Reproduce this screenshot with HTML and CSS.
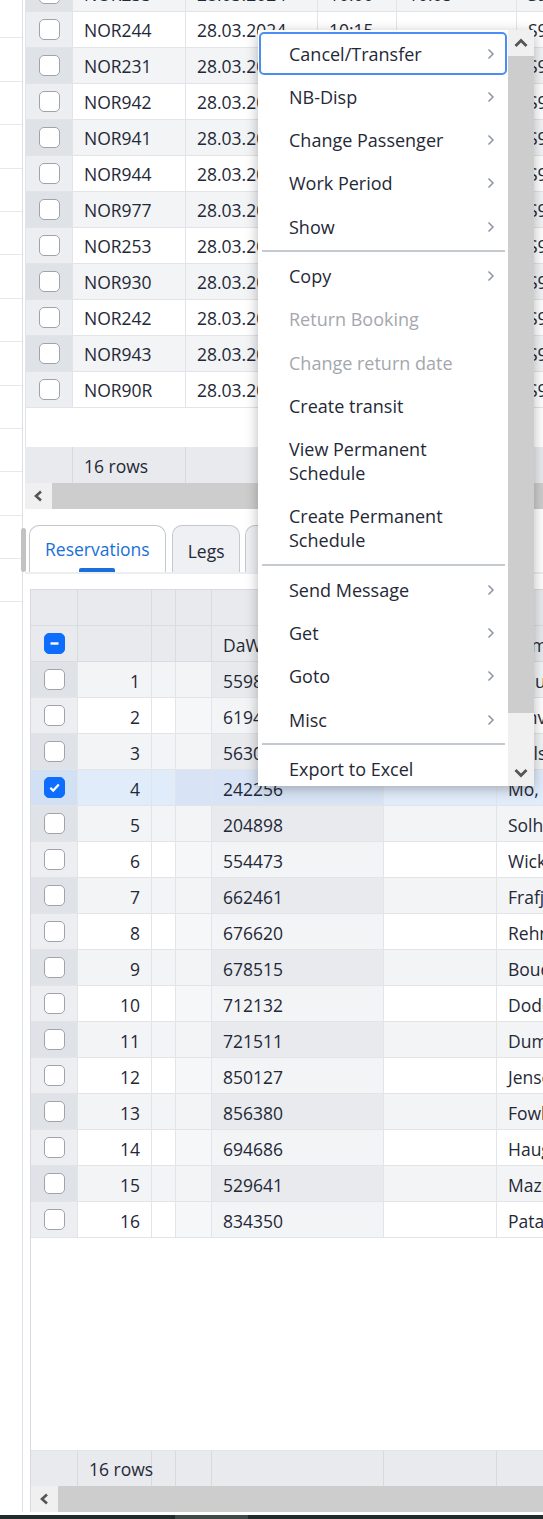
FILE: index.html
```html
<!DOCTYPE html>
<html lang="en">
<head>
<meta charset="utf-8">
<title>Bookings</title>
<link rel="stylesheet" href="styles.css">
</head>
<body>
<div class="app">
  <aside class="side">
    <div class="side-list">
      <div class="side-item"></div><div class="side-item"></div><div class="side-item"></div><div class="side-item"></div>
      <div class="side-item"></div><div class="side-item"></div><div class="side-item"></div><div class="side-item"></div>
      <div class="side-item"></div><div class="side-item"></div><div class="side-item"></div><div class="side-item"></div>
      <div class="side-item"></div><div class="side-item"></div>
    </div>
  </aside>
  <main class="main">
    <section class="tgrid">
      <div class="tbody">
        <div class="tbody-inner">
          <div class="trow alt"><div class="cell cb-cell"><span class="cb"></span></div><div class="cell">NOR233</div><div class="cell">28.03.2024</div><div class="cell">10:00</div><div class="cell">10:05</div><div class="cell">S9 Nord</div></div>
          <div class="trow"><div class="cell cb-cell"><span class="cb"></span></div><div class="cell">NOR244</div><div class="cell">28.03.2024</div><div class="cell">10:15</div><div class="cell"></div><div class="cell">S9 Nord</div></div>
          <div class="trow alt"><div class="cell cb-cell"><span class="cb"></span></div><div class="cell">NOR231</div><div class="cell">28.03.2024</div><div class="cell">10:20</div><div class="cell">10:25</div><div class="cell">S9 Nord</div></div>
          <div class="trow"><div class="cell cb-cell"><span class="cb"></span></div><div class="cell">NOR942</div><div class="cell">28.03.2024</div><div class="cell">10:30</div><div class="cell">10:35</div><div class="cell">S9 Nord</div></div>
          <div class="trow alt"><div class="cell cb-cell"><span class="cb"></span></div><div class="cell">NOR941</div><div class="cell">28.03.2024</div><div class="cell">10:40</div><div class="cell">10:45</div><div class="cell">S9 Nord</div></div>
          <div class="trow"><div class="cell cb-cell"><span class="cb"></span></div><div class="cell">NOR944</div><div class="cell">28.03.2024</div><div class="cell">10:50</div><div class="cell">10:55</div><div class="cell">S9 Nord</div></div>
          <div class="trow alt"><div class="cell cb-cell"><span class="cb"></span></div><div class="cell">NOR977</div><div class="cell">28.03.2024</div><div class="cell">11:00</div><div class="cell">11:05</div><div class="cell">S9 Nord</div></div>
          <div class="trow"><div class="cell cb-cell"><span class="cb"></span></div><div class="cell">NOR253</div><div class="cell">28.03.2024</div><div class="cell">11:10</div><div class="cell">11:15</div><div class="cell">S9 Nord</div></div>
          <div class="trow alt"><div class="cell cb-cell"><span class="cb"></span></div><div class="cell">NOR930</div><div class="cell">28.03.2024</div><div class="cell">11:20</div><div class="cell">11:25</div><div class="cell">S9 Nord</div></div>
          <div class="trow"><div class="cell cb-cell"><span class="cb"></span></div><div class="cell">NOR242</div><div class="cell">28.03.2024</div><div class="cell">11:30</div><div class="cell">11:35</div><div class="cell">S9 Nord</div></div>
          <div class="trow alt"><div class="cell cb-cell"><span class="cb"></span></div><div class="cell">NOR943</div><div class="cell">28.03.2024</div><div class="cell">11:40</div><div class="cell">11:45</div><div class="cell">S9 Nord</div></div>
          <div class="trow"><div class="cell cb-cell"><span class="cb"></span></div><div class="cell">NOR90R</div><div class="cell">28.03.2024</div><div class="cell">11:50</div><div class="cell">11:55</div><div class="cell">S9 Nord</div></div>
        </div>
      </div>
      <div class="tfoot"><div class="fcell"></div><div class="fcell">16 rows</div><div class="fcell"></div><div class="fcell"></div><div class="fcell"></div><div class="fcell"></div></div>
      <div class="hscroll">
        <div class="hs-btn"><svg width="11" height="12" viewBox="0 0 11 12"><path d="M8 1.5 L3 6 L8 10.5" fill="none" stroke="#555" stroke-width="2.6"/></svg></div>
        <div class="hs-thumb"></div>
      </div>
    </section>

    <nav class="tabs">
      <div class="tab active"><span class="tab-label">Reservations</span><span class="tab-ind"></span></div>
      <div class="tab"><span class="tab-label">Legs</span></div>
      <div class="tab"><span class="tab-label">Stops</span></div>
    </nav>

    <section class="panel">
      <div class="bgrid">
        <div class="bhead first"><div class="hcell"></div><div class="hcell"></div><div class="hcell"></div><div class="hcell"></div><div class="hcell"></div><div class="hcell"></div><div class="hcell"></div></div>
        <div class="bhead"><div class="hcell cb-cell"><span class="cb on"><svg width="13" height="13" viewBox="0 0 13 13"><path d="M2.5 6.5 H10.5" stroke="#fff" stroke-width="2.4"/></svg></span></div><div class="hcell"></div><div class="hcell"></div><div class="hcell"></div><div class="hcell">DaWId</div><div class="hcell"></div><div class="hcell">Name</div></div>

        <div class="brow alt"><div class="cell cb-cell"><span class="cb"></span></div><div class="cell num">1</div><div class="cell"></div><div class="cell c4"></div><div class="cell key">559812</div><div class="cell"></div><div class="cell">Hajuk, Per</div></div>
        <div class="brow"><div class="cell cb-cell"><span class="cb"></span></div><div class="cell num">2</div><div class="cell"></div><div class="cell c4"></div><div class="cell key">619437</div><div class="cell"></div><div class="cell">Lanvik, Ola</div></div>
        <div class="brow alt"><div class="cell cb-cell"><span class="cb"></span></div><div class="cell num">3</div><div class="cell"></div><div class="cell c4"></div><div class="cell key">563094</div><div class="cell"></div><div class="cell">Melsom, Kari</div></div>
        <div class="brow sel"><div class="cell cb-cell"><span class="cb on"><svg width="13" height="13" viewBox="0 0 13 13"><path d="M2.3 6.8 L5.2 9.6 L10.8 3.6" fill="none" stroke="#fff" stroke-width="2.2"/></svg></span></div><div class="cell num">4</div><div class="cell"></div><div class="cell c4"></div><div class="cell key">242256</div><div class="cell"></div><div class="cell">Mo, Anne</div></div>
        <div class="brow alt"><div class="cell cb-cell"><span class="cb"></span></div><div class="cell num">5</div><div class="cell"></div><div class="cell c4"></div><div class="cell key">204898</div><div class="cell"></div><div class="cell">Solheim, Jon</div></div>
        <div class="brow"><div class="cell cb-cell"><span class="cb"></span></div><div class="cell num">6</div><div class="cell"></div><div class="cell c4"></div><div class="cell key">554473</div><div class="cell"></div><div class="cell">Wickstrøm, Eva</div></div>
        <div class="brow alt"><div class="cell cb-cell"><span class="cb"></span></div><div class="cell num">7</div><div class="cell"></div><div class="cell c4"></div><div class="cell key">662461</div><div class="cell"></div><div class="cell">Frafjord, Lars</div></div>
        <div class="brow"><div class="cell cb-cell"><span class="cb"></span></div><div class="cell num">8</div><div class="cell"></div><div class="cell c4"></div><div class="cell key">676620</div><div class="cell"></div><div class="cell">Rehn, Siri</div></div>
        <div class="brow alt"><div class="cell cb-cell"><span class="cb"></span></div><div class="cell num">9</div><div class="cell"></div><div class="cell c4"></div><div class="cell key">678515</div><div class="cell"></div><div class="cell">Boudet, Marc</div></div>
        <div class="brow"><div class="cell cb-cell"><span class="cb"></span></div><div class="cell num">10</div><div class="cell"></div><div class="cell c4"></div><div class="cell key">712132</div><div class="cell"></div><div class="cell">Dodd, Helen</div></div>
        <div class="brow alt"><div class="cell cb-cell"><span class="cb"></span></div><div class="cell num">11</div><div class="cell"></div><div class="cell c4"></div><div class="cell key">721511</div><div class="cell"></div><div class="cell">Dumas, Eric</div></div>
        <div class="brow"><div class="cell cb-cell"><span class="cb"></span></div><div class="cell num">12</div><div class="cell"></div><div class="cell c4"></div><div class="cell key">850127</div><div class="cell"></div><div class="cell">Jensen, Tor</div></div>
        <div class="brow alt"><div class="cell cb-cell"><span class="cb"></span></div><div class="cell num">13</div><div class="cell"></div><div class="cell c4"></div><div class="cell key">856380</div><div class="cell"></div><div class="cell">Fowler, Ann</div></div>
        <div class="brow"><div class="cell cb-cell"><span class="cb"></span></div><div class="cell num">14</div><div class="cell"></div><div class="cell c4"></div><div class="cell key">694686</div><div class="cell"></div><div class="cell">Haugen, Liv</div></div>
        <div class="brow alt"><div class="cell cb-cell"><span class="cb"></span></div><div class="cell num">15</div><div class="cell"></div><div class="cell c4"></div><div class="cell key">529641</div><div class="cell"></div><div class="cell">Mazur, Ewa</div></div>
        <div class="brow"><div class="cell cb-cell"><span class="cb"></span></div><div class="cell num">16</div><div class="cell"></div><div class="cell c4"></div><div class="cell key">834350</div><div class="cell"></div><div class="cell">Patane, Rita</div></div>

        <div class="bempty"></div>
        <div class="bfoot"><div class="fcell"></div><div class="fcell">16 rows</div><div class="fcell"></div><div class="fcell"></div><div class="fcell"></div><div class="fcell"></div><div class="fcell"></div></div>
        <div class="hscroll">
          <div class="hs-btn"><svg width="11" height="12" viewBox="0 0 11 12"><path d="M8 1.5 L3 6 L8 10.5" fill="none" stroke="#555" stroke-width="2.6"/></svg></div>
          <div class="hs-thumb"></div>
        </div>
      </div>
    </section>
  </main>
</div>
<div class="bottom-gap"></div>
<div class="taskbar"><span class="tb-seg"></span></div>

<div class="splitter"></div>

<div class="menu">
  <div class="menu-list">
    <div class="mi focus"><span class="lbl">Cancel/Transfer</span><svg class="chev" width="8" height="12" viewBox="0 0 8 12"><path d="M1.5 1.5 L6 6 L1.5 10.5" fill="none" stroke="#8d95a5" stroke-width="1.5"/></svg></div>
    <div class="mi"><span class="lbl">NB-Disp</span><svg class="chev" width="8" height="12" viewBox="0 0 8 12"><path d="M1.5 1.5 L6 6 L1.5 10.5" fill="none" stroke="#8d95a5" stroke-width="1.5"/></svg></div>
    <div class="mi"><span class="lbl">Change Passenger</span><svg class="chev" width="8" height="12" viewBox="0 0 8 12"><path d="M1.5 1.5 L6 6 L1.5 10.5" fill="none" stroke="#8d95a5" stroke-width="1.5"/></svg></div>
    <div class="mi"><span class="lbl">Work Period</span><svg class="chev" width="8" height="12" viewBox="0 0 8 12"><path d="M1.5 1.5 L6 6 L1.5 10.5" fill="none" stroke="#8d95a5" stroke-width="1.5"/></svg></div>
    <div class="mi"><span class="lbl">Show</span><svg class="chev" width="8" height="12" viewBox="0 0 8 12"><path d="M1.5 1.5 L6 6 L1.5 10.5" fill="none" stroke="#8d95a5" stroke-width="1.5"/></svg></div>
    <div class="sep"></div>
    <div class="mi"><span class="lbl">Copy</span><svg class="chev" width="8" height="12" viewBox="0 0 8 12"><path d="M1.5 1.5 L6 6 L1.5 10.5" fill="none" stroke="#8d95a5" stroke-width="1.5"/></svg></div>
    <div class="mi disabled"><span class="lbl">Return Booking</span></div>
    <div class="mi disabled"><span class="lbl">Change return date</span></div>
    <div class="mi"><span class="lbl">Create transit</span></div>
    <div class="mi"><span class="lbl">View Permanent<br>Schedule</span></div>
    <div class="mi"><span class="lbl">Create Permanent<br>Schedule</span></div>
    <div class="sep"></div>
    <div class="mi"><span class="lbl">Send Message</span><svg class="chev" width="8" height="12" viewBox="0 0 8 12"><path d="M1.5 1.5 L6 6 L1.5 10.5" fill="none" stroke="#8d95a5" stroke-width="1.5"/></svg></div>
    <div class="mi"><span class="lbl">Get</span><svg class="chev" width="8" height="12" viewBox="0 0 8 12"><path d="M1.5 1.5 L6 6 L1.5 10.5" fill="none" stroke="#8d95a5" stroke-width="1.5"/></svg></div>
    <div class="mi"><span class="lbl">Goto</span><svg class="chev" width="8" height="12" viewBox="0 0 8 12"><path d="M1.5 1.5 L6 6 L1.5 10.5" fill="none" stroke="#8d95a5" stroke-width="1.5"/></svg></div>
    <div class="mi"><span class="lbl">Misc</span><svg class="chev" width="8" height="12" viewBox="0 0 8 12"><path d="M1.5 1.5 L6 6 L1.5 10.5" fill="none" stroke="#8d95a5" stroke-width="1.5"/></svg></div>
    <div class="sep"></div>
    <div class="mi"><span class="lbl">Export to Excel</span></div>
  </div>
  <div class="mscroll">
    <div class="ms-btn"><svg width="14" height="10" viewBox="0 0 14 10"><path d="M1.5 8 L7 2.5 L12.5 8" fill="none" stroke="#555" stroke-width="2.8"/></svg></div>
    <div class="ms-thumb"></div>
    <div class="ms-track"></div>
    <div class="ms-btn"><svg width="14" height="10" viewBox="0 0 14 10"><path d="M1.5 2 L7 7.5 L12.5 2" fill="none" stroke="#555" stroke-width="2.8"/></svg></div>
  </div>
</div>
</body>
</html>
```
FILE: styles.css
```css
* { box-sizing: border-box; }
html, body { margin: 0; padding: 0; }
body {
  width: 543px;
  height: 1519px;
  overflow: hidden;
  position: relative;
  font-family: "Open Sans", "Noto Sans", sans-serif;
  font-size: 17.5px;
  color: #1f2937;
  background: #fff;
}

.app { display: flex; height: 1512px; }

/* left strip */
.side { width: 23px; flex: none; border-right: 1px solid #dcdfe4; overflow: hidden; }
.side-list { margin-top: -5px; }
.side-item { height: 43.4px; border-bottom: 1px solid #e6e8ec; }

.main { flex: 1; min-width: 0; padding-left: 2px; display: flex; flex-direction: column; overflow: hidden; }

/* top grid */
.tgrid { width: 720px; flex: none; }
.tbody { height: 447px; overflow: hidden; border-left: 1px solid #e2e4e8; }
.tbody-inner { margin-top: -24px; }
.trow {
  display: grid;
  grid-template-columns: 47px 113px 132px 79px 120px 229px;
  height: 36px;
  border-bottom: 1px solid #e2e4e8;
  background: #fff;
}
.trow.alt { background: #f3f4f6; }
.cell {
  display: flex;
  align-items: center;
  padding: 1px 11px 0;
  border-right: 1px solid #e2e4e8;
  white-space: nowrap;
  overflow: hidden;
}
.cb-cell { justify-content: center; padding: 0; }
.trow .cb-cell { background: #eceef1; }
.trow.alt .cb-cell { background: #dfe2e6; }

.cb {
  width: 21px;
  height: 21px;
  border: 1.7px solid #9fa3aa;
  border-radius: 5px;
  background: #fff;
  display: flex;
  align-items: center;
  justify-content: center;
}
.cb.on { background: #0d6efd; border-color: #0d6efd; }

.tfoot {
  display: grid;
  grid-template-columns: 48px 113px 132px 79px 120px 229px;
  height: 36px;
  background: #e9eaed;
}
.fcell {
  display: flex;
  align-items: center;
  padding: 1px 11px 0;
  border-right: 1px solid #d6d9de;
  white-space: nowrap;
}

.hscroll { display: flex; height: 26px; flex: none; }
.hs-btn { width: 27px; background: #f0f0f0; display: flex; align-items: center; justify-content: center; }
.hs-thumb { flex: 1; background: #cdcdcd; }

/* tabs */
.tabs { display: flex; gap: 6px; padding-left: 4px; margin-top: 16px; height: 47px; flex: none; }
.tab {
  height: 47px;
  border: 1px solid #c3c7ce;
  border-bottom: none;
  border-radius: 10px 10px 0 0;
  padding: 0 15px;
  display: flex;
  flex-direction: column;
  align-items: center;
  background: #eef0f3;
  white-space: nowrap;
}
.tab + .tab + .tab { margin-left: -1px; width: 110px; }
.tab-label { flex: 1; display: flex; align-items: center; padding-top: 4px; }
.tab.active { background: #fff; color: #1a6fd8; }
.tab-ind { width: 36px; height: 4px; background: #1a6fd8; border-radius: 2px 2px 0 0; }

/* bottom panel */
.panel {
  flex: 1;
  border-top: 2px solid #eceef1;
  padding: 15px 0 0 5px;
  display: flex;
  flex-direction: column;
  min-height: 0;
}
.bgrid {
  width: 800px;
  flex: 1;
  display: flex;
  flex-direction: column;
  border-left: 1px solid #d6d9de;
}
.bhead, .brow, .bfoot {
  display: grid;
  grid-template-columns: 47px 74px 24px 36px 172px 113px 334px;
  height: 36px;
  flex: none;
}
.bhead { background: #e9eaed; border-bottom: 1px solid #d8dbe0; }
.bhead.first { border-top: 1px solid #d8dbe0; height: 37px; }
.hcell {
  display: flex;
  align-items: center;
  padding: 2px 11px 0;
  border-right: 1px solid #d8dbe0;
  white-space: nowrap;
  overflow: hidden;
}
.hcell.cb-cell { padding: 0; }
.brow { background: #fff; border-bottom: 1px solid #e2e4e8; }
.brow .cell { padding-top: 2px; }
.brow .cb-cell { padding: 0; }
.brow.alt { background: #f3f4f6; }
.brow .cb-cell { background: #eceef1; }
.brow.alt .cb-cell { background: #dfe2e6; }
.brow .key { background: #f3f4f6; }
.brow.alt .key { background: #e8eaed; }
.brow .c4 { background: #f6f7f8; }
.brow.alt .c4 { background: #f3f4f6; }
.brow.sel { background: #e1ecfb; }
.brow.sel .cb-cell { background: #d2e0f4; }
.brow.sel .key, .brow.sel .c4 { background: #d8e4f6; }
.num { justify-content: flex-end; }

.bempty { flex: 1; }
.bfoot { background: #e9eaed; border-top: 1px solid #e2e4e8; }

.bottom-gap { height: 3px; }
.taskbar { height: 4px; background: #1f2c2c; display: flex; }
.tb-seg { margin-left: 175px; width: 73px; background: #3e4a48; }

/* splitter grip overlaying the side border */
.splitter {
  position: absolute;
  left: 21px;
  top: 528px;
  width: 5px;
  height: 44px;
  background: #c2c2c2;
  border-radius: 3px;
}

/* context menu overlay */
.menu {
  position: absolute;
  left: 258px;
  top: 30px;
  width: 276px;
  height: 756px;
  background: #fff;
  box-shadow: 0 3px 12px rgba(0, 0, 0, 0.28);
  display: flex;
  color: #1f2937;
  font-size: 18px;
}
.menu-list { width: 250px; padding-top: 2px; display: flex; flex-direction: column; }
.mi {
  display: flex;
  align-items: center;
  padding: 9.65px 13px 9.65px 31px;
  line-height: 24px;
  white-space: nowrap;
}
.mi .lbl { flex: 1; }
.mi .chev { flex: none; }
.mi.focus {
  outline: 2px solid #4a8ef5;
  outline-offset: -2px;
  border-radius: 5px;
  margin: 0 1px;
  padding-left: 30px;
  padding-right: 12px;
}
.mi.disabled { color: #a4a7ae; }
.sep { height: 2px; background: #c5c9d1; margin: 2px 3px 2px 4px; flex: none; }

.mscroll { width: 26px; display: flex; flex-direction: column; background: #f0f0f0; }
.ms-btn { height: 26px; display: flex; align-items: center; justify-content: center; flex: none; }
.ms-thumb { height: 657px; background: #cdcdcd; flex: none; }
.ms-track { flex: 1; }
```
